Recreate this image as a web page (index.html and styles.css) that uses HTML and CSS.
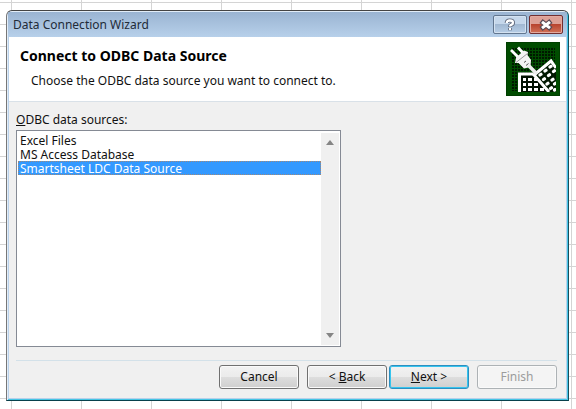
FILE: index.html
```html
<!DOCTYPE html>
<html lang="en">
<head>
<meta charset="utf-8">
<title>Data Connection Wizard</title>
<link rel="stylesheet" href="styles.css">
</head>
<body>
<main class="dialog">
  <div class="titlebar">
    <span class="caption">Data Connection Wizard</span>
    <button class="winbtn" type="button" aria-label="Help">
      <svg width="12" height="14" viewBox="0 0 12 14"><path d="M2.7 5Q2.7 2.500 5.8 2.500Q9 2.500 9 4.800Q9 6.200 7.2 6.900Q6 7.500 6 9M6 10V12.200" fill="none" stroke="#5b6478" stroke-width="4"/><path d="M2.7 5Q2.7 2.500 5.8 2.500Q9 2.500 9 4.800Q9 6.200 7.2 6.900Q6 7.500 6 8.500M6 10V12" fill="none" stroke="#fff" stroke-width="2.300"/></svg>
    </button>
    <button class="winbtn close" type="button" aria-label="Close">
      <svg width="14" height="12" viewBox="0 0 14 12"><path d="M2 2L12 10M12 2L2 10" stroke="#5b4a55" stroke-width="5"/><path d="M3 2.800L11 9.200M11 2.800L3 9.200" stroke="#fff" stroke-width="3"/></svg>
    </button>
  </div>
  <header class="header">
    <div class="intro">
      <h1>Connect to ODBC Data Source</h1>
      <p>Choose the ODBC data source you want to connect to.</p>
    </div>
    <svg class="art" width="54" height="54" viewBox="0 0 54 54" aria-hidden="true">
      <defs>
        <pattern id="mesh" width="3" height="3" patternUnits="userSpaceOnUse"><rect width="3" height="3" fill="#004a00"/><rect width="2" height="2" fill="#001800"/></pattern>
        <clipPath id="inner"><rect x="4" y="4" width="46" height="46"/></clipPath>
      </defs>
      <rect width="54" height="54" fill="#004c00"/>
      <rect x=".5" y=".5" width="53" height="53" fill="none" stroke="#003000" stroke-dasharray="1 1"/>
      <rect x="5" y="5" width="44" height="44" fill="url(#mesh)"/>
      <g clip-path="url(#inner)">
        <path d="M13 50V31H31L44 50Z" fill="#001000"/>
        <path d="M13.500 50V32H29" fill="none" stroke="#fff" stroke-width="3"/>
        <path d="M17 36h3v3h-3zM22 36h4v3h-4zM28 36h3v3h-3zM17 41h3v3h-3zM22 41h4v3h-4zM28 41h4v3h-4zM17 46h3v3h-3zM22 46h4v3h-4zM28 46h4v3h-4zM34 46h4v3h-4z" fill="#fff"/>
        <path d="M27 32L45 18L54 29V50H43Z" fill="#001800"/>
        <path d="M43 50L28 33L45 19L50 26" fill="none" stroke="#fff" stroke-width="3"/>
        <g stroke="#fff" stroke-width="3.200" stroke-linecap="round">
          <path d="M34 33l1-.7M39 29l1-.7M44 25l1-.7M37.500 37.500l1-.7M42.500 33.500l1-.7M47.500 29.500l1-.7M41 42l1-.7M46 38l1-.7M44.500 46.500l1-.7M48.500 42l1-.7M48.500 48l.5-.5"/>
        </g>
        <path d="M5 8L12 15M12 5.500L18 12" stroke="#fff" stroke-width="2.800"/>
        <path d="M9 21L10 15.500L18 8.500L22 10L21.500 13L25 18L24.500 25L18 26.500L12.500 21Z" fill="#f4f4f4"/>
        <path d="M10 20.500L21.500 11.500" stroke="#999"/>
        <path d="M18 20.500L20 19M20 23.500L22.500 21.500" stroke="#555"/>
        <path d="M22 23L31 32" stroke="#eee" stroke-width="3.500"/>
      </g>
    </svg>
  </header>
  <form class="body">
    <label class="list-label" for="sources"><u>O</u>DBC data sources:</label>
    <div class="listbox">
      <select id="sources" size="2">
        <option>Excel Files</option>
        <option>MS Access Database</option>
        <option selected>Smartsheet LDC Data Source</option>
      </select>
      <div class="scroll" aria-hidden="true">
        <svg width="8" height="5" viewBox="0 0 8 5"><path d="M0 5L4 0L8 5Z" fill="#858585"/></svg>
        <svg width="8" height="5" viewBox="0 0 8 5"><path d="M0 0L4 5L8 0Z" fill="#858585"/></svg>
      </div>
    </div>
    <div class="footer">
      <button type="button" class="btn">Cancel</button>
      <div class="pair">
        <button type="button" class="btn">&lt; <u>B</u>ack</button>
        <button type="button" class="btn default"><u>N</u>ext &gt;</button>
      </div>
      <button type="button" class="btn" disabled>Finish</button>
    </div>
  </form>
</main>
</body>
</html>
```
FILE: styles.css
```css
* {
  box-sizing: border-box;
}

body {
  margin: 0;
  min-height: 100vh;
  padding: 10px 7px 8px 6px;
  display: flex;
  font: 12px/14px "Noto Sans", "Open Sans", sans-serif;
  color: #111;
  background:
    repeating-linear-gradient(90deg, #d4d4d4 0 1px, transparent 1px 70px) 11px 0,
    repeating-linear-gradient(#d4d4d4 0 1px, transparent 1px 22px) 0 2px,
    #fff;
}

.dialog {
  flex: 1;
  display: flex;
  flex-direction: column;
  border: 1px solid #555;
  border-color: #444 #174e5c #08414c #777;
  border-radius: 6px 6px 0 0;
  box-shadow: inset 1px 1px #e2edf8, inset -1px -1px #45c5e5;
  padding: 1px;
  background: #b9d1ea;
  overflow: hidden;
}

.titlebar {
  display: flex;
  align-items: flex-start;
  gap: 2px;
  height: 25px;
  padding: 3px 4px 0 5px;
  background: linear-gradient(#9ab4d2, #b7d0ea);
}

.caption {
  flex: 1;
  line-height: 20px;
  color: #222b38;
}

.winbtn {
  display: grid;
  place-items: center;
  width: 34px;
  height: 19px;
  padding: 0;
  border: 1px solid #62768f;
  border-radius: 2px;
  background: linear-gradient(#c5d7eb 48%, #a1b8d2 50%, #b7cee7);
  box-shadow: inset 0 0 0 1px #d4e2f1;
}

.close {
  border-color: #722f31;
  background: linear-gradient(#dda096 48%, #b8442f 50%, #d17259);
  box-shadow: inset 0 0 0 1px #e3aaa0;
}

.header {
  display: flex;
  justify-content: space-between;
  margin: 0 1px;
  padding: 5px 6px 5px 11px;
  border-bottom: 1px solid #d9e1e8;
  background: #fff;
}

.intro {
  padding-top: 6px;
}

h1 {
  margin: 0;
  font-size: 14px;
  line-height: 16px;
  color: #000;
}

p {
  margin: 10px 0 0 11px;
}

.art {
  flex: none;
}

.body {
  flex: 1;
  display: flex;
  flex-direction: column;
  margin: 0 1px 1px;
  padding: 11px 9px 9px 7px;
  background: #f0f0f0;
}

.list-label {
  margin-bottom: 3px;
}

.listbox {
  flex: 1;
  display: flex;
  width: 60%;
  border: 1px solid #858a94;
  padding: 2px 1px 1px;
  background: #fff;
}

select {
  flex: 1;
  min-width: 0;
  height: auto;
  margin: 0;
  padding: 0;
  border: 0;
  outline: 0;
  border-radius: 0;
  font: inherit;
  color: #111;
  background: #fff;
  overflow: hidden;
}

option {
  display: flex;
  align-items: center;
  height: 14px;
  min-height: 14px;
  padding: 0 2px;
}

option:checked {
  color: #fff;
  background: #3399ff linear-gradient(#3399ff, #3399ff);
  outline: 1px dotted #a08878;
  outline-offset: -1px;
}

.scroll {
  display: flex;
  flex-direction: column;
  align-items: center;
  justify-content: space-between;
  width: 18px;
  padding: 7px 0;
  background: #f0f0f0;
}

.footer {
  display: flex;
  justify-content: flex-end;
  gap: 8px;
  margin-top: 13px;
  padding-top: 4px;
  border-top: 1px solid #d3e1e9;
}

.pair {
  display: flex;
  gap: 2px;
}

.btn {
  width: 80px;
  height: 24px;
  padding: 0;
  border: 1px solid #707070;
  border-radius: 3px;
  font: inherit;
  color: #111;
  background: linear-gradient(#f2f2f2, #ebebeb 49%, #dddddd 51%, #cfcfcf);
  box-shadow: inset 0 0 0 1px #fafafa;
}

.default {
  border-color: #2c8fc0;
  box-shadow: inset 0 0 0 1px #35c4ee;
}

.btn:disabled {
  border-color: #adb2b5;
  color: #9c9c9c;
  background: #f4f4f4;
}
```
